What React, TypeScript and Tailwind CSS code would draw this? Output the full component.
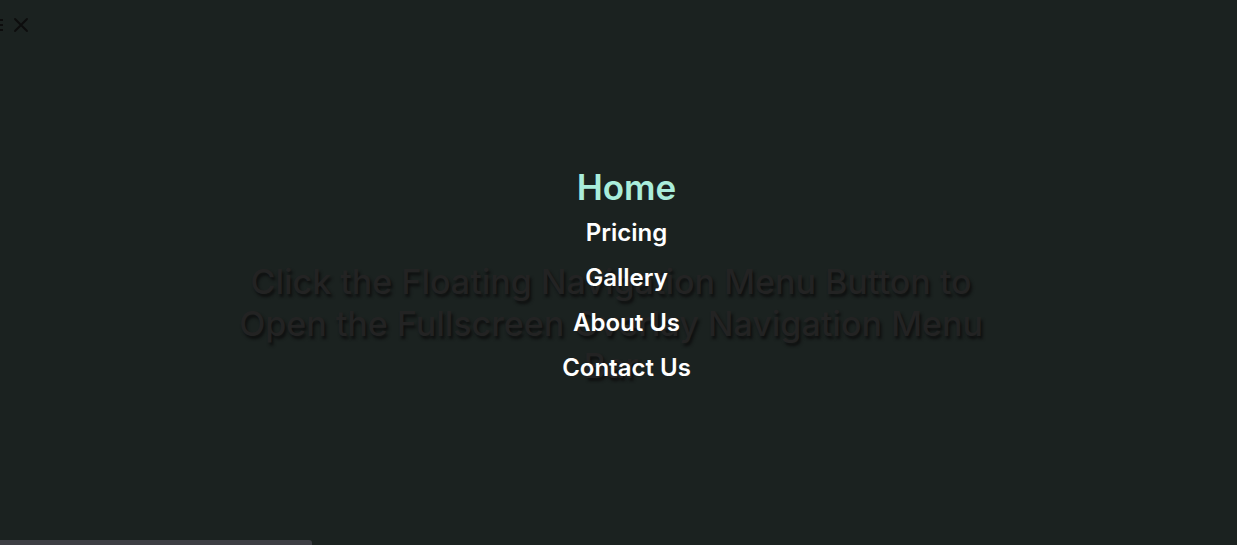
const links = [
  { label: "Home", active: true },
  { label: "Pricing", active: false },
  { label: "Gallery", active: false },
  { label: "About Us", active: false },
  { label: "Contact Us", active: false },
];

export default function App() {
  return (
    <div className="relative h-[545px] w-full overflow-hidden bg-[#1b2220]" style={{ fontFamily: "Inter, 'Noto Sans', sans-serif" }}>
      <div className="flex justify-center pr-[15px] pt-[261px]">
        <h1 className="max-w-[750px] text-center text-[34px] font-medium leading-[42px] text-[#232323] [text-shadow:2px_3px_3px_#0e0f0f]">
          Click the Floating Navigation Menu Button to Open the Fullscreen Overlay Navigation Menu Bar
        </h1>
      </div>

      {/* floating toggle, partly off screen */}
      <button className="absolute left-[-11px] top-[18px] flex items-center gap-[11px]">
        <span className="flex w-[14px] flex-col gap-[3px]">
          <span className="h-[2px] w-full bg-[#0d0d0d]" />
          <span className="h-[2px] w-full bg-[#0d0d0d]" />
          <span className="h-[2px] w-full bg-[#0d0d0d]" />
        </span>
        <svg width="14" height="14" viewBox="0 0 14 14" fill="none" stroke="#0d0d0d" strokeWidth="1.8" strokeLinecap="round">
          <path d="M1 1L13 13M13 1L1 13" />
        </svg>
      </button>

      <nav className="absolute inset-0 flex items-center justify-center pl-4 pt-[9px]">
        <ul className="flex flex-col items-center">
          {links.map((link) => (
            <li key={link.label}>
              <a
                href="#"
                className={
                  link.active
                    ? "block text-[35px] font-semibold leading-[45px] text-[#a9eddb]"
                    : "block text-[24px] font-semibold leading-[45px] text-white"
                }
              >
                {link.label}
              </a>
            </li>
          ))}
        </ul>
      </nav>

      <div className="absolute bottom-0 left-0 h-[5px] w-[312px] rounded-tr-[3px] bg-[#3d3e44]" />
    </div>
  );
}
